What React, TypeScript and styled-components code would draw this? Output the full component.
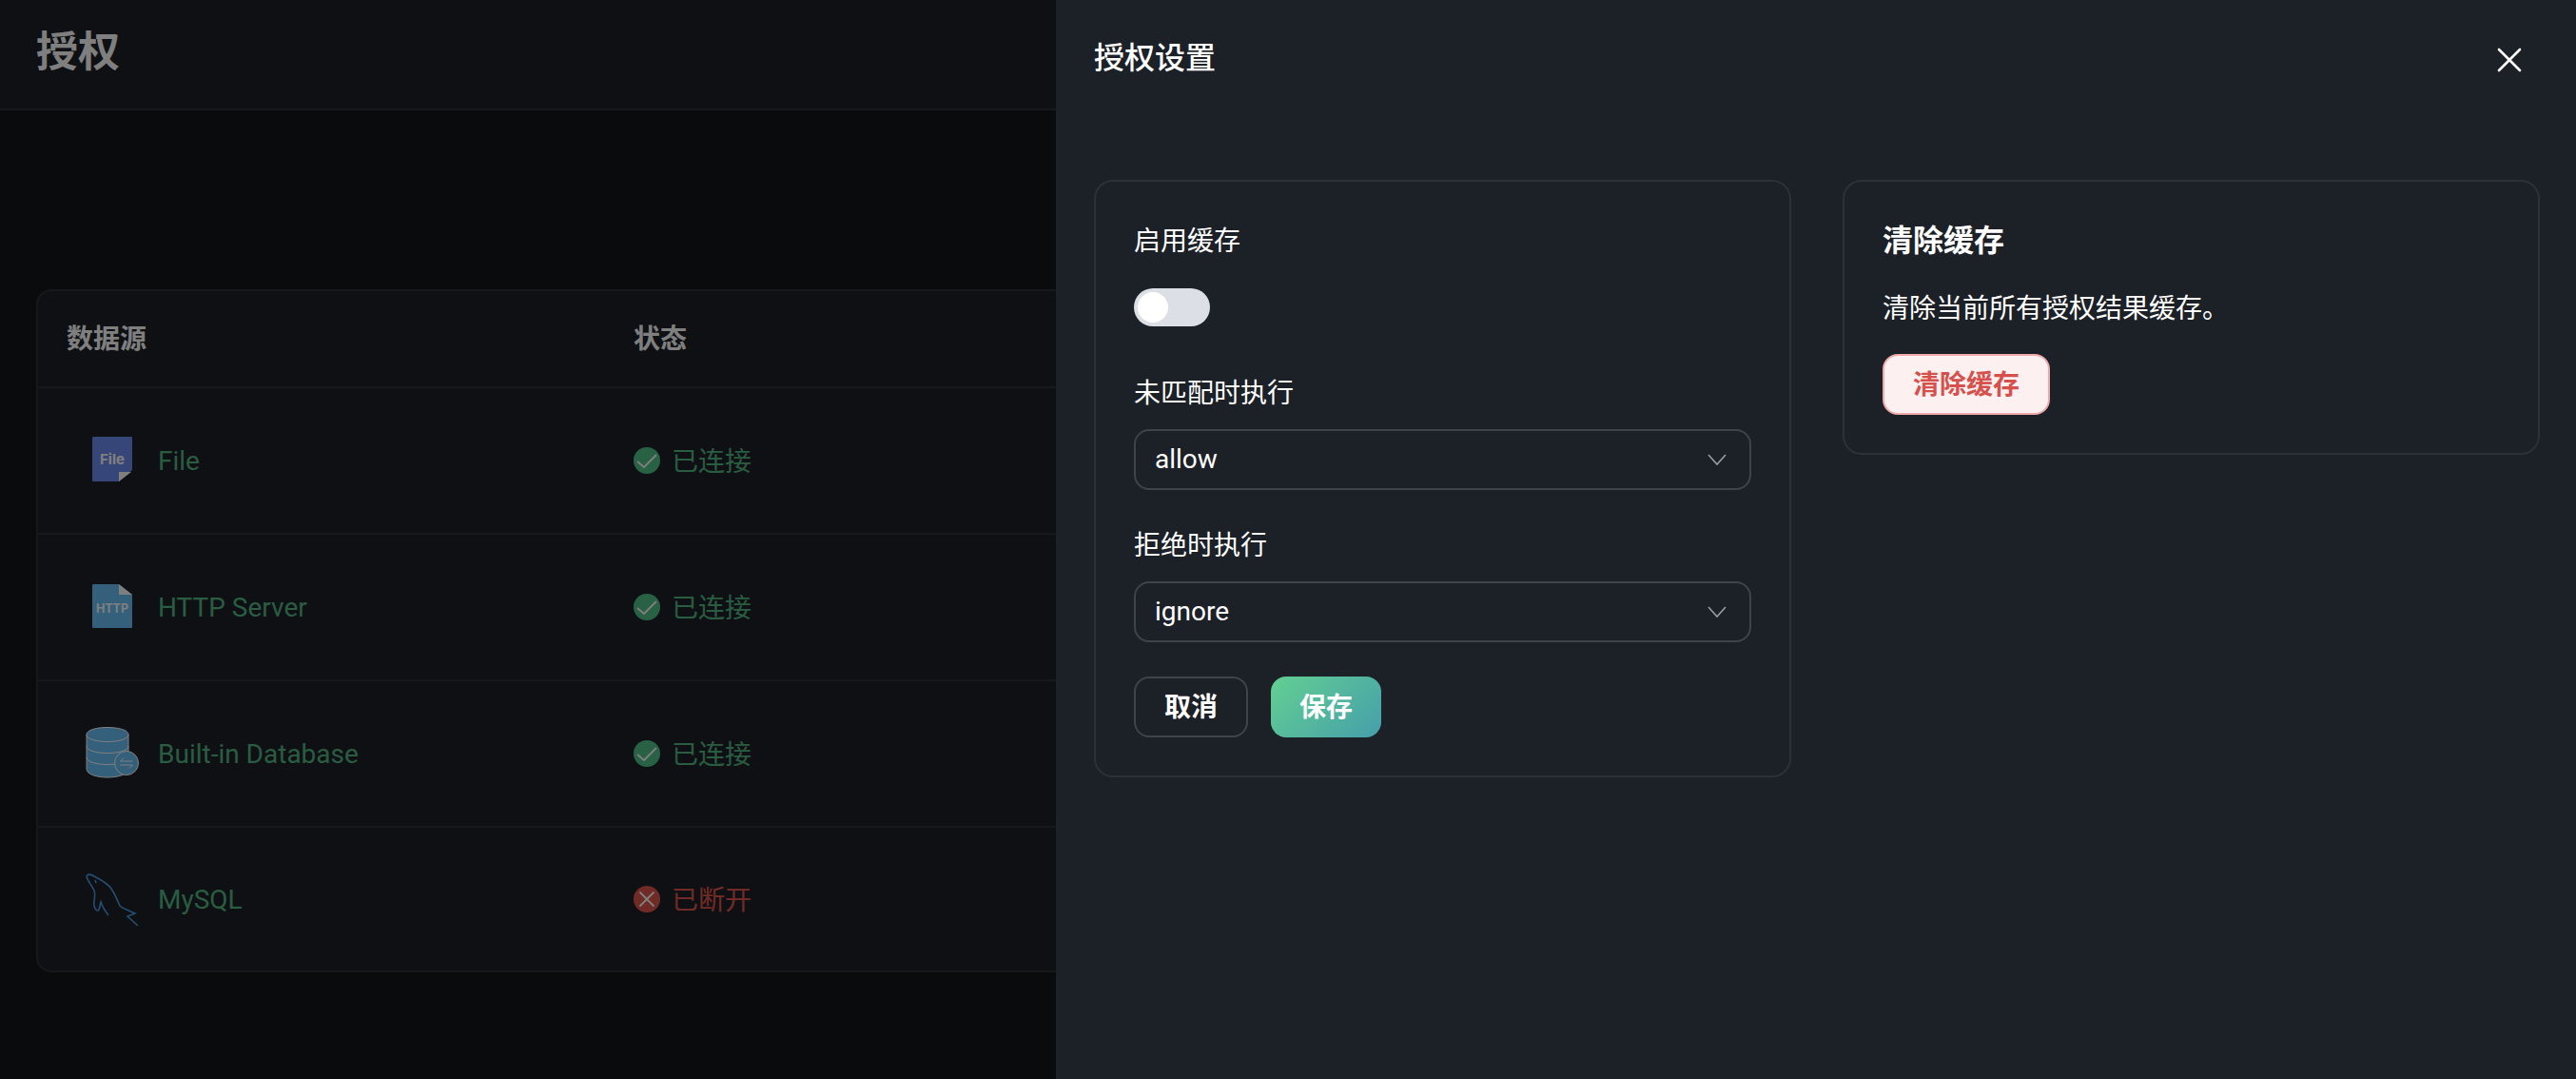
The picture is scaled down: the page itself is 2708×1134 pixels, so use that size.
import React from "react";
import styled, { createGlobalStyle } from "styled-components";

const fontStack = `Roboto, "Noto Sans CJK SC", sans-serif`;

const GlobalStyle = createGlobalStyle`
  html, body {
    margin: 0;
    padding: 0;
    background: #14161a;
    font-family: ${fontStack};
  }
  * {
    box-sizing: border-box;
  }
`;

const Page = styled.div`
  position: relative;
  width: 2708px;
  height: 1134px;
  overflow: hidden;
  background: #14161a;
`;

const Header = styled.header`
  height: 116px;
  padding: 0 38px;
  display: flex;
  align-items: center;
  background: #1d2129;
  border-bottom: 2px solid #2c3038;
`;

const PageTitle = styled.h1`
  margin: 0 0 4px;
  font-size: 44px;
  font-weight: 700;
  line-height: 60px;
  color: #fff;
`;

const Content = styled.main`
  padding: 188px 38px 0;
`;

const Table = styled.div`
  border: 2px solid #2c3038;
  border-radius: 16px;
  background: #1d2129;
  overflow: hidden;
`;

const Row = styled.div<{ $head?: boolean }>`
  display: grid;
  grid-template-columns: 596px 1fr;
  align-items: center;
  padding-left: 30px;
  height: ${(p) => (p.$head ? "102px" : "154px")};
  border-bottom: 2px solid #2c3038;
  &:last-child {
    border-bottom: none;
    height: 150px;
  }
`;

const HeadCell = styled.div`
  padding-bottom: 5px;
  font-size: 28px;
  font-weight: 700;
  color: #fff;
`;

const NameCell = styled.div`
  display: flex;
  align-items: center;
  gap: 20px;
  padding-left: 20px;
  font-size: 28px;
  color: #54b884;
`;

const StatusCell = styled.div<{ $ok: boolean }>`
  display: flex;
  align-items: center;
  gap: 12px;
  font-size: 28px;
  color: ${(p) => (p.$ok ? "#54b884" : "#e2574c")};
`;

const StatusText = styled.span`
  position: relative;
  top: -1px;
`;

const Mask = styled.div`
  position: absolute;
  inset: 0;
  background: rgba(0, 0, 0, 0.5);
`;

const Drawer = styled.aside`
  position: absolute;
  top: 0;
  right: 0;
  bottom: 0;
  width: 1598px;
  padding: 0 38px 0 40px;
  background: #1c2027;
  color: #fff;
`;

const DrawerHead = styled.div`
  height: 189px;
  padding-top: 39px;
  display: flex;
  align-items: flex-start;
  justify-content: space-between;
`;

const DrawerTitle = styled.h2`
  margin: 0;
  font-size: 32px;
  font-weight: 500;
  line-height: 44px;
`;

const CloseButton = styled.button`
  margin: 10px 18px 0 0;
  padding: 0;
  width: 28px;
  height: 28px;
  border: none;
  background: none;
  color: #fff;
  display: flex;
`;

const Cards = styled.div`
  display: grid;
  grid-template-columns: 733px 733px;
  gap: 54px;
  align-items: start;
`;

const Card = styled.section`
  padding: 40px;
  border: 2px solid #2c3038;
  border-radius: 20px;
`;

const FormItem = styled.div`
  margin-bottom: 36px;
`;

const Label = styled.div`
  height: 44px;
  margin-bottom: 16px;
  padding-top: 1px;
  font-size: 28px;
  line-height: 44px;
`;

const ToggleRow = styled.div`
  height: 64px;
  display: flex;
  align-items: center;
`;

const Toggle = styled.div`
  width: 80px;
  height: 40px;
  padding: 4px;
  border-radius: 20px;
  background: #dcdfe6;
`;

const Knob = styled.div`
  width: 32px;
  height: 32px;
  border-radius: 50%;
  background: #fff;
`;

const Select = styled.div`
  height: 64px;
  padding: 0 24px 1px 20px;
  display: flex;
  align-items: center;
  justify-content: space-between;
  border: 2px solid #3f444c;
  border-radius: 16px;
  font-size: 28px;
`;

const Actions = styled.div`
  display: flex;
  gap: 24px;
`;

const Button = styled.button`
  height: 64px;
  padding: 0 30px 5px;
  border: 2px solid transparent;
  border-radius: 16px;
  font-family: ${fontStack};
  font-size: 28px;
  font-weight: 700;
  color: #fff;
  background: none;
`;

const CancelButton = styled(Button)`
  border-color: #3f444c;
`;

const SaveButton = styled(Button)`
  border: none;
  background: linear-gradient(135deg, #63cf92, #459faa);
`;

const DangerButton = styled(Button)`
  border-color: #f0a8a8;
  background: #fcf0f0;
  color: #d6504c;
`;

const CardTitle = styled.h3`
  margin: 0 0 28px;
  font-size: 32px;
  font-weight: 700;
  line-height: 44px;
`;

const CardText = styled.p`
  margin: 0 0 25px;
  font-size: 28px;
  line-height: 44px;
`;

const FileIcon = () => (
  <svg width="56" height="56" viewBox="20 17 56 56">
    <path d="M28 20 H68 Q69 20 69 21 V55 L55 67 H28 Q27 67 27 66 V21 Q27 20 28 20 Z" fill="#6f8cf0" />
    <path d="M55 67 V57 H68 Z" fill="#fff" />
    <text x="48" y="49" textAnchor="middle" fontFamily="Inter, sans-serif" fontSize="15" fontWeight="700" fill="#fff">File</text>
  </svg>
);

const HttpIcon = () => (
  <svg width="56" height="56" viewBox="20 11 56 56">
    <path d="M28 15 H55 L69 26 V60 Q69 61 68 61 H28 Q27 61 27 60 V16 Q27 15 28 15 Z" fill="#68c0f8" />
    <path d="M55 15 L69 26 H55 Z" fill="#fff" />
    <text x="48" y="45" textAnchor="middle" fontFamily="Inter, sans-serif" fontSize="12.5" fontWeight="700" fill="#fff">HTTP</text>
  </svg>
);

const DatabaseIcon = () => (
  <svg width="56" height="56" viewBox="20 15 56 56" fill="none">
    <path d="M21 23 C21 13 65 13 65 23 V59 C65 71 21 71 21 59 Z" fill="#68c0f8" stroke="#fff" strokeWidth="1" />
    <path d="M21 23 C21 33 65 33 65 23 M21 35 C21 45 65 45 65 35 M21 47 C21 57 65 57 65 47" stroke="#fff" strokeWidth="1" />
    <circle cx="63" cy="53" r="12.5" fill="#68c0f8" stroke="#fff" strokeWidth="1" />
    <path d="M60 47.5 L56.5 51 H69.5 M69.5 55 H56.5 M66 58.5 L69.5 55" stroke="#fff" strokeWidth="1" />
  </svg>
);

const MysqlIcon = () => (
  <svg width="56" height="56" viewBox="20 12 56 56" fill="none" stroke="#4b9ce6" strokeWidth="1.6">
    <path d="M21 16 C22 13 26 14 29 16 C36 20 43 23 47 29 C51 35 53 40 56 47 C59 50 64 51 72 55 L64 58 L75 68" />
    <path d="M21 16 C22 21 27 26 29 31 C31 36 28 41 29 47 C30 52 33 53 34 51 C35 48 35 46 36 43 C38 49 41 53 44 57" />
    <path d="M30 20 L31 23" />
  </svg>
);

const StatusIcon = ({ ok }: { ok: boolean }) => (
  <svg width="28" height="28" viewBox="0 0 28 28" fill="none">
    <circle cx="14" cy="14" r="14" fill={ok ? "#52c288" : "#e2574c"} />
    {ok ? (
      <path d="M4 15 L11 21 L24 8" stroke="#fff" strokeWidth="1.8" />
    ) : (
      <path d="M6.5 6.5 L21.5 21.5 M21.5 6.5 L6.5 21.5" stroke="#fff" strokeWidth="1.8" />
    )}
  </svg>
);

const Chevron = () => (
  <svg width="20" height="12" viewBox="0 0 20 12" fill="none" stroke="#9a9ea6" strokeWidth="1.6">
    <path d="M1 1 L10 11 L19 1" />
  </svg>
);

const sources = [
  { name: "File", icon: <FileIcon />, ok: true },
  { name: "HTTP Server", icon: <HttpIcon />, ok: true },
  { name: "Built-in Database", icon: <DatabaseIcon />, ok: true },
  { name: "MySQL", icon: <MysqlIcon />, ok: false },
];

const App: React.FC = () => {
  return (
    <Page>
      <GlobalStyle />
      <Header>
        <PageTitle>授权</PageTitle>
      </Header>
      <Content>
        <Table>
          <Row $head>
            <HeadCell>数据源</HeadCell>
            <HeadCell>状态</HeadCell>
          </Row>
          {sources.map((s) => (
            <Row key={s.name}>
              <NameCell>
                {s.icon}
                {s.name}
              </NameCell>
              <StatusCell $ok={s.ok}>
                <StatusIcon ok={s.ok} />
                <StatusText>{s.ok ? "已连接" : "已断开"}</StatusText>
              </StatusCell>
            </Row>
          ))}
        </Table>
      </Content>
      <Mask />
      <Drawer>
        <DrawerHead>
          <DrawerTitle>授权设置</DrawerTitle>
          <CloseButton>
            <svg width="28" height="28" viewBox="0 0 28 28" fill="none" stroke="#fff" strokeWidth="2.6" strokeLinecap="round">
              <path d="M3 3 L25 25 M25 3 L3 25" />
            </svg>
          </CloseButton>
        </DrawerHead>
        <Cards>
          <Card>
            <FormItem>
              <Label>启用缓存</Label>
              <ToggleRow>
                <Toggle>
                  <Knob />
                </Toggle>
              </ToggleRow>
            </FormItem>
            <FormItem>
              <Label>未匹配时执行</Label>
              <Select>
                allow
                <Chevron />
              </Select>
            </FormItem>
            <FormItem>
              <Label>拒绝时执行</Label>
              <Select>
                ignore
                <Chevron />
              </Select>
            </FormItem>
            <Actions>
              <CancelButton>取消</CancelButton>
              <SaveButton>保存</SaveButton>
            </Actions>
          </Card>
          <Card>
            <CardTitle>清除缓存</CardTitle>
            <CardText>清除当前所有授权结果缓存。</CardText>
            <DangerButton>清除缓存</DangerButton>
          </Card>
        </Cards>
      </Drawer>
    </Page>
  );
};

export default App;
